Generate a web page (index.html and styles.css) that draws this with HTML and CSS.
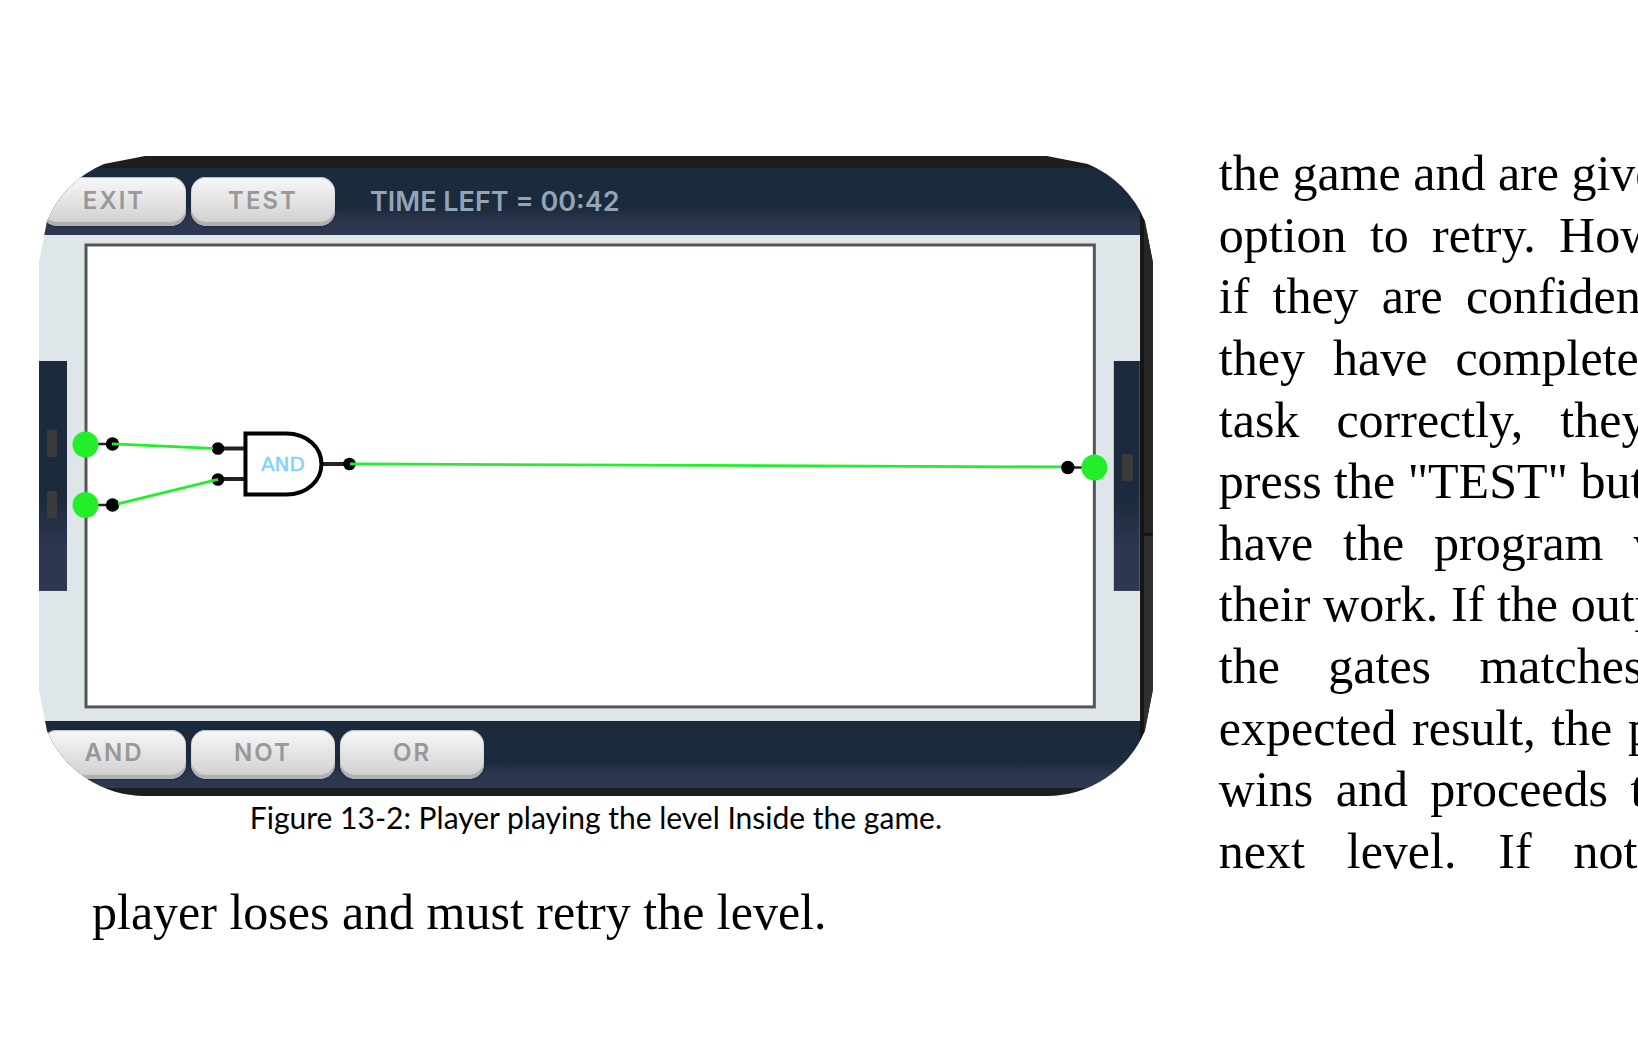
FILE: index.html
```html
<!DOCTYPE html>
<html lang="en">
<head>
<meta charset="utf-8">
<title>Figure 13-2</title>
<link rel="stylesheet" href="styles.css">
</head>
<body>
<svg class="defs" width="0" height="0" aria-hidden="true">
  <clipPath id="frame" clipPathUnits="objectBoundingBox">
    <path transform="scale(.000897666 .0015625)" d="M106 0H1008L1049 8A106 106 0 0 1 1106 65L1114 106V534L1106 575A106 106 0 0 1 1008 640H106A106 106 0 0 1 8 575L0 534V106L8 65A106 106 0 0 1 65 8Z"/>
  </clipPath>
</svg>
<main class="page">
  <figure class="figure">
    <div class="game">
      <div class="screen">
        <header class="bar">
          <button class="key" type="button">EXIT</button>
          <button class="key" type="button">TEST</button>
          <span class="timer">TIME LEFT = 00:42</span>
        </header>
        <svg class="board" viewBox="39 235 1101 486" role="img" aria-label="Two inputs wired through an AND gate to one output">
          <defs>
            <linearGradient id="panel" x1="0" y1="0" x2="0" y2="1">
              <stop offset="0" stop-color="#1c2a3d"/>
              <stop offset=".6" stop-color="#1c2a3d"/>
              <stop offset=".82" stop-color="#2d3850"/>
              <stop offset="1" stop-color="#2d3850"/>
            </linearGradient>
          </defs>
          <rect x="39" y="235" width="1101" height="486" fill="#dee6e9"/>
          <rect x="86" y="245" width="1008.500" height="462" fill="#fff" stroke="#555" stroke-width="3"/>
          <rect x="39" y="361" width="28" height="230" fill="url(#panel)"/>
          <rect x="1114" y="361" width="26" height="230" fill="url(#panel)"/>
          <g fill="#3b3b3b">
            <rect x="47" y="430" width="10" height="27"/>
            <rect x="47" y="491" width="10" height="27"/>
            <rect x="1122" y="454" width="11" height="27"/>
          </g>
          <g stroke="#222" stroke-width="2.500">
            <path d="M86 444H112M86 505H112M1068 467.500H1094"/>
            <path d="M218 448.500H245M218 479H245M322 464H349" stroke-width="4"/>
          </g>
          <path d="M245.500 433.500H286C308 433.500 321.500 448 321.500 464S308 494.500 286 494.500H245.500Z" fill="#fff" stroke="#000" stroke-width="4"/>
          <text x="283" y="471" class="gate-name">AND</text>
          <g>
            <circle cx="112.500" cy="444" r="6.700"/>
            <circle cx="112.500" cy="505" r="6.700"/>
            <circle cx="218" cy="448.500" r="6.300"/>
            <circle cx="218" cy="479.500" r="6.300"/>
            <circle cx="349.500" cy="464" r="6.300"/>
          </g>
          <path d="M112 444L213 448.500M118 504L218 479.500M350 464L1062 467" stroke="#22ef2a" stroke-width="2.800" fill="none"/>
          <circle cx="1068" cy="467.500" r="6.700"/>
          <g fill="#22ef2a">
            <circle cx="85.500" cy="444.500" r="13"/>
            <circle cx="85.500" cy="505" r="13"/>
            <circle cx="1094.500" cy="467.500" r="13"/>
          </g>
        </svg>
        <footer class="bar">
          <button class="key" type="button">AND</button>
          <button class="key" type="button">NOT</button>
          <button class="key" type="button">OR</button>
        </footer>
      </div>
    </div>
    <figcaption class="caption">Figure 13-2: Player playing the level Inside the game.</figcaption>
  </figure>
  <p class="prose">
    <span class="line">the game and are given the</span>
    <span class="line">option to retry. However,</span>
    <span class="line">if they are confident that</span>
    <span class="line">they have completed the</span>
    <span class="line">task correctly, they can</span>
    <span class="line">press the "TEST" button to</span>
    <span class="line">have the program verify</span>
    <span class="line">their work. If the output of</span>
    <span class="line">the gates matches the</span>
    <span class="line">expected result, the player</span>
    <span class="line">wins and proceeds to the</span>
    <span class="line">next level. If not, the</span>
  </p>
  <p class="closing">player loses and must retry the level.</p>
</main>
</body>
</html>
```
FILE: styles.css
```css
* {
  box-sizing: border-box;
}

body {
  margin: 0;
  background: #fff;
  color: #000;
  overflow-x: hidden;
  font-family: "Liberation Serif", serif;
}

.defs {
  position: absolute;
}

.page {
  display: grid;
  grid-template-columns: 68vw 32.6vw;
  column-gap: 66px;
  padding: 143px 0 120px 39px;
}

.figure {
  margin: 0;
  padding-top: 13px;
}

.game {
  border: solid #1e1e1e;
  border-width: 12px 0 8px;
  clip-path: url(#frame);
}

.screen {
  padding-right: 13px;
  background:
    linear-gradient(#262626 0 365px, #161616 365px 368px, #303030 368px) right / 9px 100% no-repeat,
    linear-gradient(#151515, #151515) right / 13px 100% no-repeat;
}

.bar {
  display: flex;
  align-items: center;
  gap: 5px;
  height: 67px;
  padding-left: 3px;
  background: linear-gradient(#1c2a3d 60%, #2d3850 82%);
}

.key {
  width: 144px;
  height: 49px;
  padding: 0 0 2px;
  border: 0;
  border-radius: 15px;
  background: linear-gradient(#f8f8f8, #cecece);
  box-shadow: inset 0 -4px 1px #b0b0b0, inset 0 1px 1px #b8b8c0, 0 1px 2px #1c2a3d;
  color: #989898;
  font: 600 24px/30px Inter, sans-serif;
  letter-spacing: 2px;
}

.timer {
  padding-left: 30px;
  color: #92a5b5;
  font: 600 27px/34px Inter, sans-serif;
}

.board {
  display: block;
  width: 100%;
}

.gate-name {
  fill: #7fd1ff;
  stroke: #7fd1ff;
  stroke-width: .4px;
  font: 20px "DejaVu Sans", sans-serif;
  text-anchor: middle;
}

.caption {
  padding: 3px 0 46px;
  text-align: center;
  font: 30px/36px Lato, sans-serif;
}

.prose {
  display: flex;
  flex-direction: column;
  justify-content: space-between;
  margin: 0;
  font-size: 50px;
  line-height: 60px;
}

.line {
  white-space: nowrap;
  text-align: justify;
  text-align-last: justify;
}

.closing {
  margin: 1px 0 0 53px;
  font-size: 50px;
  line-height: 60px;
}
```
